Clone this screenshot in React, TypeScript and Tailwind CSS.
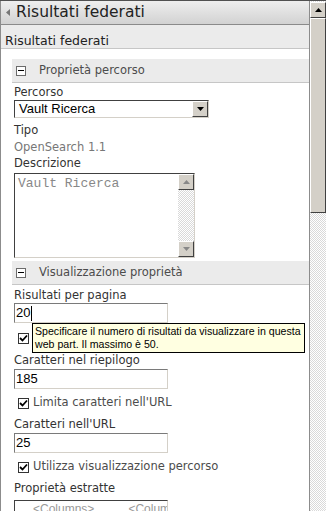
import React from 'react';

const font = "font-['Tahoma','DejaVu_Sans',sans-serif]";

function SectionHeader({ title }: { title: string }) {
  return (
    <div className="ml-[11px] h-[24px] flex items-center bg-[#ebebeb] border-b border-[#c6c6c6]">
      <span className="ml-[4px] w-[10px] h-[10px] border border-[#6b6b6b] bg-white flex items-center justify-center">
        <span className="w-[6px] h-px bg-black" />
      </span>
      <span className="ml-[13px] text-[11.5px] text-[#4c4c4c]">{title}</span>
    </div>
  );
}

function Label({ children, className = '' }: { children: React.ReactNode; className?: string }) {
  return <div className={`pl-[13px] text-[11.5px] leading-[14px] ${className}`}>{children}</div>;
}

function TextBox({ value, caret, className = '' }: { value: string; caret?: boolean; className?: string }) {
  return (
    <div
      className={`ml-[13px] w-[154px] h-[20px] border border-t-[#7a7a7a] border-l-[#7a7a7a] border-r-[#d4d0c8] border-b-[#d4d0c8] bg-white flex items-center pl-[1px] font-['Liberation_Sans',sans-serif] text-[13px] text-black ${className}`}
    >
      {value}
      {caret && <span className="ml-[1px] w-px h-[15px] bg-black" />}
    </div>
  );
}

function Check({ label, className = '' }: { label?: string; className?: string }) {
  return (
    <div className={`ml-[17px] flex items-center gap-[4px] h-[16px] ${className}`}>
      <span className="w-[11px] h-[11px] border border-[#333] bg-white flex items-center justify-center">
        <svg width="9" height="9" viewBox="0 0 9 9">
          <path d="M1 4 L3.5 6.5 L8 1.5" stroke="black" strokeWidth="1.8" fill="none" />
        </svg>
      </span>
      {label && <span className="text-[11.5px] text-[#4c4c4c]">{label}</span>}
    </div>
  );
}

function ScrollArrow({ down, light }: { down?: boolean; light?: boolean }) {
  return (
    <div className="w-[16px] h-[16px] bg-[#d4d0c8] border border-t-white border-l-white border-r-[#404040] border-b-[#404040] flex items-center justify-center">
      <svg width="7" height="4" viewBox="0 0 7 4">
        <path d={down ? 'M0 0 H7 L3.5 4 Z' : 'M0 4 H7 L3.5 0 Z'} fill={light ? '#888' : 'black'} />
      </svg>
    </div>
  );
}

const checker = 'bg-[repeating-conic-gradient(#d9d9d9_0%_25%,#ffffff_0%_50%)] bg-[length:2px_2px]';

export default function App() {
  return (
    <div className={`w-[326px] h-[511px] overflow-hidden flex bg-white border-t border-[#505050] text-[#333] ${font}`}>
      <div className="relative flex-1 border-l border-[#8c8c8c]">
        {/* header */}
        <div className="h-[24px] flex items-center bg-gradient-to-b from-[#eeeeee] to-[#d2d2d2] border-b border-[#8a8a8a]">
          <svg className="ml-[5px]" width="4" height="7" viewBox="0 0 4 7">
            <path d="M4 0 V7 L0 3.5 Z" fill="#777" />
          </svg>
          <span className="ml-[6px] text-[15.5px] text-[#222]">Risultati federati</span>
        </div>
        <div className="h-[24px] flex items-end pl-[4px] bg-[#ebebeb] border-b border-[#c6c6c6] text-[12.5px] leading-[14px] text-[#222]">
          Risultati federati
        </div>

        <div className="mt-[10px]">
          <SectionHeader title="Proprietà percorso" />
        </div>
        <Label className="mt-[2px]">Percorso</Label>
        <div className="ml-[13px] mt-px w-[195px] h-[18px] border border-t-[#404040] border-l-[#404040] border-r-[#d4d0c8] border-b-[#d4d0c8] bg-white flex items-center">
          <span className="flex-1 pl-[4px] font-['Liberation_Sans',sans-serif] text-[13px] text-black">Vault Ricerca</span>
          <ScrollArrow down />
        </div>
        <Label className="mt-[5px]">Tipo</Label>
        <Label className="mt-[3px] text-[#777]">OpenSearch 1.1</Label>
        <Label className="mt-[2px]">Descrizione</Label>
        <div className="ml-[13px] mt-[3px] w-[181px] h-[85px] border border-t-[#404040] border-l-[#404040] border-r-[#d4d0c8] border-b-[#d4d0c8] bg-white flex">
          <div className="flex-1 pl-[3px] pt-[2px] font-['Liberation_Mono',monospace] text-[13px] text-[#888] leading-[15px]">
            Vault Ricerca
          </div>
          <div className={`w-[16px] flex flex-col justify-between ${checker}`}>
            <ScrollArrow light />
            <ScrollArrow down light />
          </div>
        </div>

        <div className="mt-[3px]">
          <SectionHeader title="Visualizzazione proprietà" />
        </div>
        <Label className="mt-[3px]">Risultati per pagina</Label>
        <TextBox value="20" caret className="mt-px" />
        <Check className="mt-[7px]" />
        <Label className="mt-[7px]">Caratteri nel riepilogo</Label>
        <TextBox value="185" className="mt-[2px]" />
        <Check label="Limita caratteri nell'URL" className="mt-[6px]" />
        <Label className="mt-[6px]">Caratteri nell'URL</Label>
        <TextBox value="25" className="mt-[2px]" />
        <Check label="Utilizza visualizzazione percorso" className="mt-[6px]" />
        <Label className="mt-[6px]">Proprietà estratte</Label>
        <div className="ml-[13px] mt-[5px] w-[154px] h-[40px] border border-t-[#404040] border-l-[#404040] border-r-[#d4d0c8] bg-white overflow-hidden">
          <div className="flex pt-[1px] font-['Liberation_Sans',sans-serif] text-[12px] leading-[14px] text-[#999] whitespace-nowrap">
            <span className="ml-[18px]">&lt;Columns&gt;</span>
            <span className="ml-[34px]">&lt;Columns&gt;</span>
          </div>
        </div>

        {/* tooltip */}
        <div className="absolute left-[31px] top-[322px] border border-black bg-[#ffffe1] pl-[2px] pr-[3px] py-[1px] font-['Liberation_Sans',sans-serif] text-[10.6px] leading-[13px] text-black whitespace-nowrap">
          Specificare il numero di risultati da visualizzare in questa
          <br />
          web part. Il massimo è 50.
        </div>
      </div>

      {/* page scrollbar */}
      <div className={`w-[17px] shrink-0 border-l border-[#8c8c8c] flex flex-col ${checker}`}>
        <div className="pt-px">
          <ScrollArrow />
        </div>
        <div className="h-[195px] bg-[#d4d0c8] border border-t-white border-l-white border-r-[#404040] border-b-[#404040]" />
      </div>
    </div>
  );
}
